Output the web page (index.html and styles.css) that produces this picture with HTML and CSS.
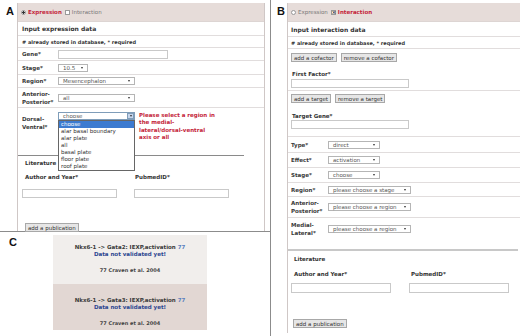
FILE: index.html
```html
<!DOCTYPE html>
<html lang="en">
<head>
    <meta charset="UTF-8">
    <meta name="viewport" content="width=device-width, initial-scale=1.0">
    <title>Expression and interaction input</title>
    <link rel="stylesheet" href="styles.css">
</head>
<body>
<div class="figure">

    <div class="left-col">
        <!-- Panel A: expression form -->
        <div class="part part-a">
            <div class="panel-label">A</div>
            <div class="panel panel-a">
                <div class="tabs">
                    <span class="radio on"></span><span class="tab active">Expression</span>
                    <span class="check"></span><span class="tab">Interaction</span>
                </div>
                <div class="row title h13">Input expression data</div>
                <div class="row note h11"># already stored in database, * required</div>
                <div class="row h12">
                    <div class="field-label">Gene*</div>
                    <div class="text-box w110"></div>
                </div>
                <div class="row h13">
                    <div class="field-label">Stage*</div>
                    <div class="select w30">10.5<span class="arrow"></span></div>
                </div>
                <div class="row h12">
                    <div class="field-label">Region*</div>
                    <div class="select w77">Mesencephalon<span class="arrow"></span></div>
                </div>
                <div class="row h19">
                    <div class="field-label">Anterior-<br>Posterior*</div>
                    <div class="select w77">all<span class="arrow"></span></div>
                </div>
                <div class="row dorsal">
                    <div class="field-label">Dorsal-<br>Ventral*</div>
                    <div class="select-wrap">
                        <div class="select w77 open">choose<span class="arrow-btn"><span class="arrow"></span></span></div>
                        <ul class="options">
                            <li class="picked">choose</li>
                            <li>alar basal boundary</li>
                            <li>alar plate</li>
                            <li>all</li>
                            <li>basal plate</li>
                            <li>floor plate</li>
                            <li>roof plate</li>
                        </ul>
                    </div>
                    <div class="warning">Please select a region in<br>the medial-<br>lateral/dorsal-ventral<br>axis or all</div>
                </div>
                <div class="divider"></div>
                <div class="lit lit-a">
                    <div class="lit-title">Literature</div>
                    <div class="lit-grid">
                        <div class="lit-col">
                            <div class="lit-label">Author and Year*</div>
                            <div class="text-box"></div>
                        </div>
                        <div class="lit-col second">
                            <div class="lit-label">PubmedID*</div>
                            <div class="text-box"></div>
                        </div>
                    </div>
                    <button class="btn pub-btn">add a publication</button>
                </div>
            </div>
        </div>

        <!-- Panel C: stored interactions -->
        <div class="part part-c">
            <div class="panel-label">C</div>
            <div class="results">
                <div class="result">
                    <div class="res-head">Nkx6-1 -&gt; Gata2: IEXP,activation <span class="ref">77</span></div>
                    <div class="res-warn">Data not validated yet!</div>
                    <div class="res-cite">77 Craven et al. 2004</div>
                </div>
                <div class="result dark">
                    <div class="res-head">Nkx6-1 -&gt; Gata3: IEXP,activation <span class="ref">77</span></div>
                    <div class="res-warn">Data not validated yet!</div>
                    <div class="res-cite">77 Craven et al. 2004</div>
                </div>
            </div>
        </div>
    </div>

    <!-- Panel B: interaction form -->
    <div class="part part-b">
        <div class="panel-label">B</div>
        <div class="panel panel-b">
            <div class="tabs">
                <span class="radio"></span><span class="tab">Expression</span>
                <span class="check on">&times;</span><span class="tab active">Interaction</span>
            </div>
            <div class="row title h14">Input interaction data</div>
            <div class="row note h11"># already stored in database, * required</div>
            <div class="block factor">
                <div class="btn-row">
                    <button class="btn">add a cofactor</button>
                    <button class="btn">remove a cofactor</button>
                </div>
                <div class="block-label">First Factor*</div>
                <div class="text-box w118"></div>
            </div>
            <div class="block target">
                <div class="btn-row">
                    <button class="btn">add a target</button>
                    <button class="btn">remove a target</button>
                </div>
                <div class="block-label">Target Gene*</div>
                <div class="text-box w118"></div>
            </div>
            <div class="row h15">
                <div class="field-label">Type*</div>
                <div class="select w52">direct<span class="arrow"></span></div>
            </div>
            <div class="row h14">
                <div class="field-label">Effect*</div>
                <div class="select w52">activation<span class="arrow"></span></div>
            </div>
            <div class="row h14">
                <div class="field-label">Stage*</div>
                <div class="select w52">choose<span class="arrow"></span></div>
            </div>
            <div class="row h13">
                <div class="field-label">Region*</div>
                <div class="select w83">please choose a stage<span class="arrow"></span></div>
            </div>
            <div class="row h20">
                <div class="field-label">Anterior-<br>Posterior*</div>
                <div class="select w83">please choose a region<span class="arrow"></span></div>
            </div>
            <div class="row h20 last">
                <div class="field-label">Medial-<br>Lateral*</div>
                <div class="select w83">please choose a region<span class="arrow"></span></div>
            </div>
            <div class="divider thick"></div>
            <div class="lit lit-b">
                <div class="lit-title">Literature</div>
                <div class="lit-grid">
                    <div class="lit-col">
                        <div class="lit-label">Author and Year*</div>
                        <div class="text-box"></div>
                    </div>
                    <div class="lit-col second">
                        <div class="lit-label">PubmedID*</div>
                        <div class="text-box"></div>
                    </div>
                </div>
                <button class="btn pub-btn">add a publication</button>
            </div>
        </div>
    </div>

</div>
</body>
</html>
```

FILE: styles.css
```css
* {
    box-sizing: border-box;
}
body {
    margin: 0;
    width: 520px;
    height: 336px;
    overflow: hidden;
    background: #fff;
    font-family: "DejaVu Sans", Verdana, sans-serif;
    font-size: 5.5px;
    color: #333;
}
.figure {
    display: flex;
    height: 336px;
}
.left-col {
    width: 271px;
    border-right: 1px solid #8c8c8c;
}
.part {
    display: flex;
}
.panel-label {
    font: bold 11px "Liberation Sans", Arial, sans-serif;
    color: #111;
}

/* panel A */
.part-a {
    height: 232px;
    border-bottom: 1px solid #8c8c8c;
}
.part-a .panel-label {
    width: 17px;
    padding: 5px 0 0 6px;
}
.panel {
    margin-top: 3px;
    border-left: 1px solid #cfc7c6;
}
.panel-a {
    width: 248px;
    border-right: 1px solid #cfc7c6;
}
.tabs {
    height: 19px;
    background: #e6dcd9;
    border-bottom: 1px solid #ddd5d3;
    display: flex;
    align-items: center;
    padding-left: 3px;
    color: #777;
}
.tab {
    margin: 0 3px 0 2px;
}
.tab.active {
    color: #c41e3a;
    font-weight: bold;
}
.radio {
    width: 5px;
    height: 5px;
    border: 1px solid #999;
    border-radius: 50%;
    background: #fff;
}
.radio.on {
    background: radial-gradient(circle, #333 0 1px, #fff 1.2px);
}
.check {
    width: 5px;
    height: 5px;
    border: 1px solid #999;
    background: #fff;
    font-size: 5px;
    line-height: 3px;
    text-align: center;
    color: #222;
    font-weight: bold;
}
.row {
    display: flex;
    align-items: center;
    padding-left: 4px;
    border-bottom: 1px solid #e1dddd;
    font-weight: bold;
}
.row.last {
    border-bottom: none;
}
.h11 { height: 12px; }
.h12 { height: 13px; }
.h13 { height: 14px; }
.h14 { height: 15px; }
.h15 { height: 16px; }
.h19 { height: 20px; }
.h20 { height: 21px; }
.title {
    font-size: 6px;
    color: #333;
}
.note {
    font-size: 5px;
}
.field-label {
    width: 36px;
    line-height: 8px;
    color: #3a3a3a;
}
.panel-b .field-label {
    width: 37px;
}
.text-box {
    height: 9px;
    border: 1px solid #c9c9c9;
    background: #fff;
}
.w110 { width: 110px; }
.w118 { width: 118px; }
.select {
    height: 8px;
    border: 1px solid #b5b5b5;
    background: #fff;
    display: flex;
    align-items: center;
    padding-left: 4px;
    font-weight: normal;
    color: #555;
}
.w30 { width: 30px; }
.w52 { width: 52px; }
.w77 { width: 77px; }
.w83 { width: 83px; }
.arrow {
    margin-left: auto;
    margin-right: 4px;
    border-left: 1.5px solid transparent;
    border-right: 1.5px solid transparent;
    border-top: 2px solid #333;
}

/* open dropdown */
.dorsal {
    height: 47px;
    align-items: flex-start;
    padding-top: 4px;
    border-bottom: none;
}
.dorsal .field-label {
    padding-top: 3px;
}
.select-wrap {
    position: relative;
}
.select.open {
    height: 8px;
    padding-right: 0;
    border-color: #7f9db9;
}
.arrow-btn {
    margin-left: auto;
    width: 7px;
    height: 6px;
    background: #c5d5ec;
    border: 1px solid #7f9db9;
    display: flex;
    align-items: center;
    justify-content: center;
}
.arrow-btn .arrow {
    margin: 0;
}
.options {
    position: absolute;
    top: 8px;
    left: 0;
    width: 77px;
    margin: 0;
    padding: 0;
    list-style: none;
    background: #fff;
    border: 1px solid #666;
    font-weight: normal;
    color: #333;
    z-index: 2;
}
.options li {
    height: 7px;
    line-height: 7px;
    padding-left: 2px;
}
.options li.picked {
    background: #3d7bd0;
    color: #fff;
}
.warning {
    margin-left: 4px;
    line-height: 7.4px;
    white-space: nowrap;
    color: #c41e3a;
}
.divider {
    border-top: 1px solid #8a8a8a;
    margin-right: 20px;
}

/* literature block */
.lit {
    padding: 4px 0 0 4px;
    font-weight: bold;
}
.lit-title {
    height: 7px;
    line-height: 7px;
    margin-left: 3px;
}
.lit-grid {
    display: flex;
    gap: 17px;
    margin-top: 7px;
}
.lit-col {
    width: 95px;
}
.lit-label {
    height: 7px;
    line-height: 7px;
    margin-left: 3px;
}
.lit-col.second .lit-label {
    margin-left: 1px;
}
.lit-col .text-box {
    margin-top: 8px;
}
.btn {
    height: 9px;
    padding: 0 2px;
    border: 1px solid #a8a8a8;
    background: #e6e6e6;
    font-family: "DejaVu Sans", Verdana, sans-serif;
    font-size: 5.5px;
    line-height: 6px;
    color: #333;
}
.pub-btn {
    display: block;
    margin: 25px 0 0 3px;
}

/* panel B */
.part-b {
    flex: 1;
}
.part-b .panel-label {
    width: 16px;
    padding: 5px 0 0 6px;
}
.panel-b {
    flex: 1;
    height: 330px;
}
.panel-b .row {
    padding-left: 3px;
}
.block {
    padding-left: 3px;
    border-bottom: 1px solid #e1dddd;
    font-weight: bold;
}
.btn-row {
    display: flex;
    gap: 4px;
}
.factor {
    height: 42px;
    padding-top: 4px;
}
.target {
    height: 46px;
    padding-top: 3px;
}
.factor .block-label {
    margin-top: 9px;
}
.target .block-label {
    margin-top: 10px;
}
.block-label {
    height: 7px;
    line-height: 7px;
    margin-left: 1px;
}
.factor .text-box {
    margin-top: 1px;
}
.divider.thick {
    margin-top: 10px;
    margin-right: 2px;
    border-top: 2px solid #c8c8c8;
}
.lit-b {
    padding: 5px 0 0 3px;
}
.lit-b .lit-grid {
    gap: 18px;
    margin-top: 8px;
}
.lit-b .lit-col {
    width: 100px;
}
.lit-b .lit-col .text-box {
    height: 10px;
    margin-top: 5px;
}
.lit-b .lit-col.second .lit-label {
    margin-left: 2px;
}
.lit-b .pub-btn {
    margin: 26px 0 0 2px;
}

/* panel C */
.part-c .panel-label {
    width: 53px;
    padding: 4px 0 0 9px;
}
.results {
    width: 154px;
    margin-top: 3px;
    text-align: center;
    font-weight: bold;
}
.result {
    height: 49px;
    padding-top: 9px;
    background: #f1eeec;
}
.result.dark {
    height: 46px;
    padding-top: 13px;
    background: #e2d7d3;
}
.res-head {
    line-height: 7px;
    color: #3a3a3a;
}
.ref {
    color: #5a7fbf;
}
.res-warn {
    line-height: 7px;
    color: #2c4690;
}
.res-cite {
    margin-top: 9px;
    line-height: 7px;
    font-size: 5px;
    color: #444;
}
```
